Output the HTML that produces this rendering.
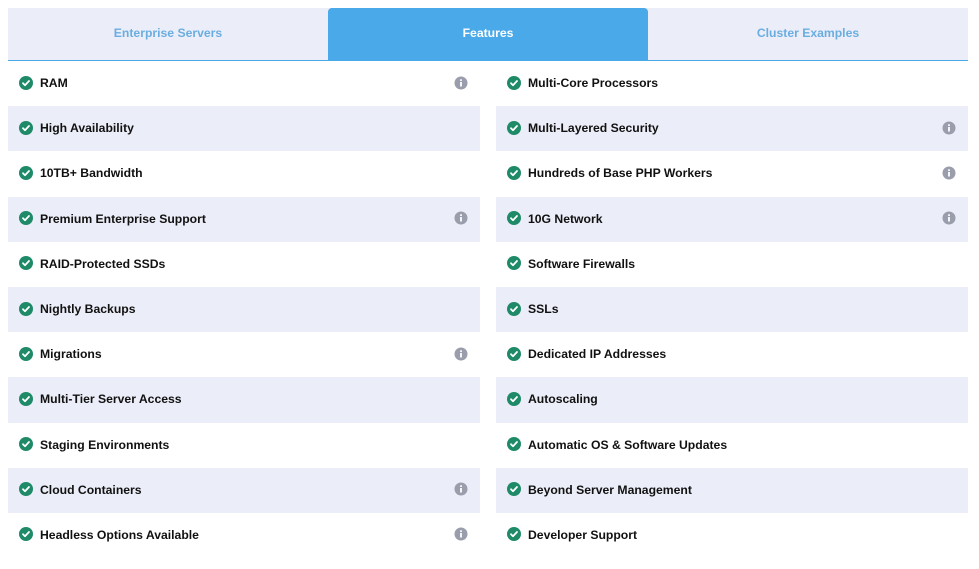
<!DOCTYPE html>
<html><head><style>
body{margin:0;background:#fff;font-family:"Liberation Sans",sans-serif;width:979px;height:569px;overflow:hidden;position:relative}
.tabs{position:absolute;left:8px;top:8px;width:960px;height:52px;display:flex;border-bottom:1px solid #4aa9e8;background:#ebedf8}
.tab{width:320px;display:flex;align-items:center;justify-content:center;font-size:12.2px;font-weight:bold;color:#6aaee0;padding-bottom:2px;box-sizing:border-box}
.tab.act{background:#4aa9e8;color:#fff;border-radius:4px 4px 0 0}
.col{position:absolute;top:61px;width:472px}
.row{height:45.2px;position:relative;display:flex;align-items:center;font-size:12.2px;font-weight:bold;color:#111}
.row:nth-child(even){background:#ebedf8}
.ck{position:absolute;left:11px;top:50%;margin-top:-8px}
.row span{position:absolute;left:32px;top:50%;margin-top:-7.5px;line-height:15px}
.inf{position:absolute;left:446px;top:50%;margin-top:-8px}
</style></head><body>
<div class="tabs"><div class="tab">Enterprise Servers</div><div class="tab act">Features</div><div class="tab">Cluster Examples</div></div>
<svg width="0" height="0" style="position:absolute"><defs>
<symbol id="c" viewBox="0 0 14 14"><circle cx="7" cy="7" r="7" fill="#1f8a68"/><path d="M4 7.2l2 2 4-4.2" stroke="#fff" stroke-width="1.8" fill="none" stroke-linecap="round" stroke-linejoin="round"/></symbol>
<symbol id="i" viewBox="0 0 14 14"><circle cx="7" cy="7" r="6.5" fill="#9a9dac"/><rect x="6.1" y="6" width="1.8" height="4.5" fill="#fff"/><circle cx="7" cy="4.1" r="1" fill="#fff"/></symbol>
</defs></svg>
<div class="col" style="left:8px">
<div class="row"><svg class="ck" width="14" height="14"><use href="#c"/></svg><span>RAM</span><svg class="inf" width="14" height="14"><use href="#i"/></svg></div>
<div class="row"><svg class="ck" width="14" height="14"><use href="#c"/></svg><span>High Availability</span></div>
<div class="row"><svg class="ck" width="14" height="14"><use href="#c"/></svg><span>10TB+ Bandwidth</span></div>
<div class="row"><svg class="ck" width="14" height="14"><use href="#c"/></svg><span>Premium Enterprise Support</span><svg class="inf" width="14" height="14"><use href="#i"/></svg></div>
<div class="row"><svg class="ck" width="14" height="14"><use href="#c"/></svg><span>RAID-Protected SSDs</span></div>
<div class="row"><svg class="ck" width="14" height="14"><use href="#c"/></svg><span>Nightly Backups</span></div>
<div class="row"><svg class="ck" width="14" height="14"><use href="#c"/></svg><span>Migrations</span><svg class="inf" width="14" height="14"><use href="#i"/></svg></div>
<div class="row"><svg class="ck" width="14" height="14"><use href="#c"/></svg><span>Multi-Tier Server Access</span></div>
<div class="row"><svg class="ck" width="14" height="14"><use href="#c"/></svg><span>Staging Environments</span></div>
<div class="row"><svg class="ck" width="14" height="14"><use href="#c"/></svg><span>Cloud Containers</span><svg class="inf" width="14" height="14"><use href="#i"/></svg></div>
<div class="row"><svg class="ck" width="14" height="14"><use href="#c"/></svg><span>Headless Options Available</span><svg class="inf" width="14" height="14"><use href="#i"/></svg></div>
</div>
<div class="col" style="left:496px">
<div class="row"><svg class="ck" width="14" height="14"><use href="#c"/></svg><span>Multi-Core Processors</span></div>
<div class="row"><svg class="ck" width="14" height="14"><use href="#c"/></svg><span>Multi-Layered Security</span><svg class="inf" width="14" height="14"><use href="#i"/></svg></div>
<div class="row"><svg class="ck" width="14" height="14"><use href="#c"/></svg><span>Hundreds of Base PHP Workers</span><svg class="inf" width="14" height="14"><use href="#i"/></svg></div>
<div class="row"><svg class="ck" width="14" height="14"><use href="#c"/></svg><span>10G Network</span><svg class="inf" width="14" height="14"><use href="#i"/></svg></div>
<div class="row"><svg class="ck" width="14" height="14"><use href="#c"/></svg><span>Software Firewalls</span></div>
<div class="row"><svg class="ck" width="14" height="14"><use href="#c"/></svg><span>SSLs</span></div>
<div class="row"><svg class="ck" width="14" height="14"><use href="#c"/></svg><span>Dedicated IP Addresses</span></div>
<div class="row"><svg class="ck" width="14" height="14"><use href="#c"/></svg><span>Autoscaling</span></div>
<div class="row"><svg class="ck" width="14" height="14"><use href="#c"/></svg><span>Automatic OS &amp; Software Updates</span></div>
<div class="row"><svg class="ck" width="14" height="14"><use href="#c"/></svg><span>Beyond Server Management</span></div>
<div class="row"><svg class="ck" width="14" height="14"><use href="#c"/></svg><span>Developer Support</span></div>
</div>
</body></html>
